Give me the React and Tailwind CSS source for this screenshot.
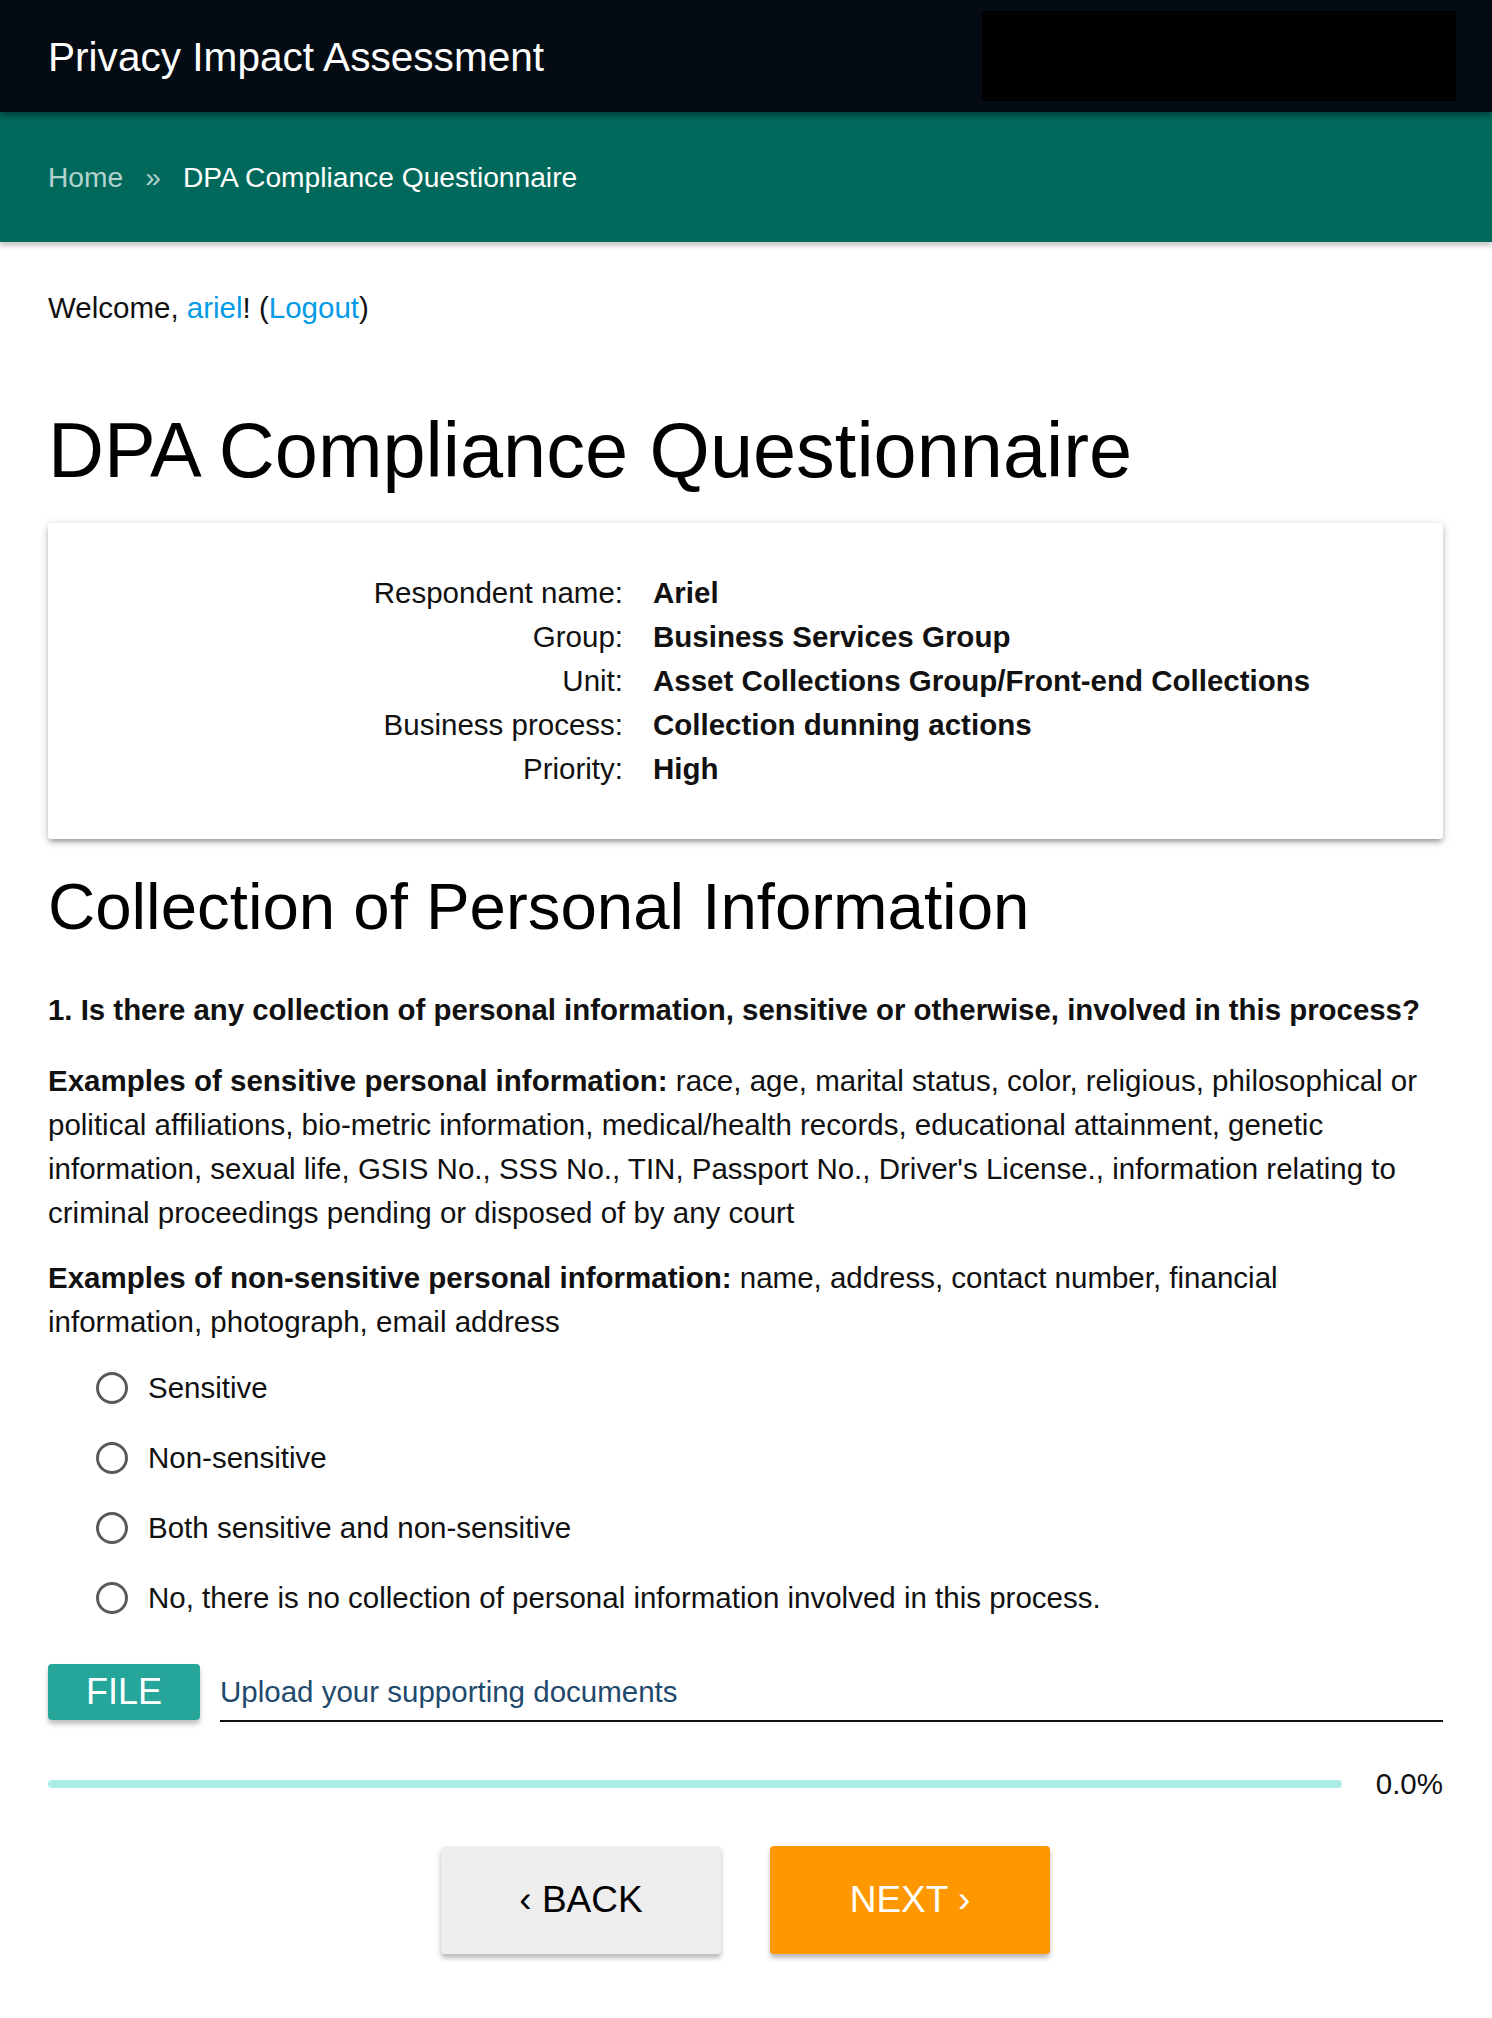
import React from "react";

const details = [
  ["Respondent name:", "Ariel"],
  ["Group:", "Business Services Group"],
  ["Unit:", "Asset Collections Group/Front-end Collections"],
  ["Business process:", "Collection dunning actions"],
  ["Priority:", "High"],
];

const choices = [
  "Sensitive",
  "Non-sensitive",
  "Both sensitive and non-sensitive",
  "No, there is no collection of personal information involved in this process.",
];

const App = () => {
  return (
    <div className="min-h-[2018px] bg-white text-[#111] font-['Liberation_Sans',Arial,sans-serif]">
      {/* top bar */}
      <header className="relative z-20 h-[112px] bg-[#040b12] flex items-center justify-between pl-[48px] pr-[36px] shadow-[0_4px_6px_rgba(0,0,0,0.35)]">
        <h1 className="text-[40.6px] text-white pt-[2px]">Privacy Impact Assessment</h1>
        <div className="w-[474px] h-[90px] bg-black" />
      </header>

      {/* breadcrumb */}
      <nav className="relative z-10 h-[130px] bg-[#00695c] flex items-center pl-[48px] text-[28.2px] shadow-[0_4px_5px_rgba(0,0,0,0.22)]">
        <span className="text-[#b3d2ce]">Home</span>
        <span className="text-[#b3d2ce] mx-[22px]">»</span>
        <span className="text-white">DPA Compliance Questionnaire</span>
      </nav>

      <main className="pl-[48px] pr-[49px] text-[29.5px] leading-[44px]">
        <p className="mt-[44px]">
          Welcome, <a className="text-[#039be5]">ariel</a>! (
          <a className="text-[#039be5]">Logout</a>)
        </p>

        <h2 className="mt-[74px] text-[77.5px] leading-[92px] text-black">
          DPA Compliance Questionnaire
        </h2>

        <div className="mt-[27px] bg-white rounded-[3px] pt-[48px] pb-[48px] grid grid-cols-[575px_1fr] gap-x-[30px] shadow-[0_4px_4px_0_rgba(0,0,0,0.14),0_6px_2px_-4px_rgba(0,0,0,0.12),0_2px_10px_0_rgba(0,0,0,0.2)]">
          {details.map(([label, value]) => (
            <React.Fragment key={label}>
              <div className="text-right">{label}</div>
              <div className="font-bold">{value}</div>
            </React.Fragment>
          ))}
        </div>

        <h3 className="mt-[29px] text-[65.4px] leading-[78px] text-black">
          Collection of Personal Information
        </h3>

        <p className="mt-[42px] font-bold text-[29.4px]">
          1. Is there any collection of personal information, sensitive or otherwise, involved in this process?
        </p>

        <p className="mt-[27px] max-w-[1384px]">
          <b>Examples of sensitive personal information:</b> race, age, marital status, color, religious,
          philosophical or political affiliations, bio-metric information, medical/health records, educational
          attainment, genetic information, sexual life, GSIS No., SSS No., TIN, Passport No., Driver's License.,
          information relating to criminal proceedings pending or disposed of by any court
        </p>

        <p className="mt-[21px] max-w-[1384px]">
          <b>Examples of non-sensitive personal information:</b> name, address, contact number, financial
          information, photograph, email address
        </p>

        <div className="mt-[9px] pl-[48px]">
          {choices.map((c) => (
            <label key={c} className="h-[70px] flex items-center gap-[20px]">
              <span className="w-[32px] h-[32px] rounded-full border-[3px] border-[#5a5a5a] shrink-0" />
              <span>{c}</span>
            </label>
          ))}
        </div>

        {/* file upload */}
        <div className="mt-[31px] flex items-start gap-[20px]">
          <button className="w-[152px] h-[56px] rounded-[4px] bg-[#26a69a] text-white text-[36px] leading-none shadow-[0_4px_5px_rgba(0,0,0,0.25)]">
            FILE
          </button>
          <div className="flex-1 h-[58px] border-b-2 border-[#111] flex items-end pb-[6px] text-[#1f4a6c]">
            Upload your supporting documents
          </div>
        </div>

        {/* progress */}
        <div className="mt-[40px] flex items-center gap-[34px]">
          <div className="flex-1 h-[8px] rounded-full bg-[#acece6]" />
          <span>0.0%</span>
        </div>

        <div className="mt-[40px] flex justify-center gap-[49px] text-[37px]">
          <button className="w-[280px] h-[108px] rounded-[4px] bg-[#eeeeee] text-black shadow-[0_4px_5px_rgba(0,0,0,0.28)]">
            ‹ BACK
          </button>
          <button className="w-[280px] h-[108px] rounded-[4px] bg-[#ff9800] text-white shadow-[0_4px_5px_rgba(0,0,0,0.28)]">
            NEXT ›
          </button>
        </div>
      </main>
    </div>
  );
};

export default App;
